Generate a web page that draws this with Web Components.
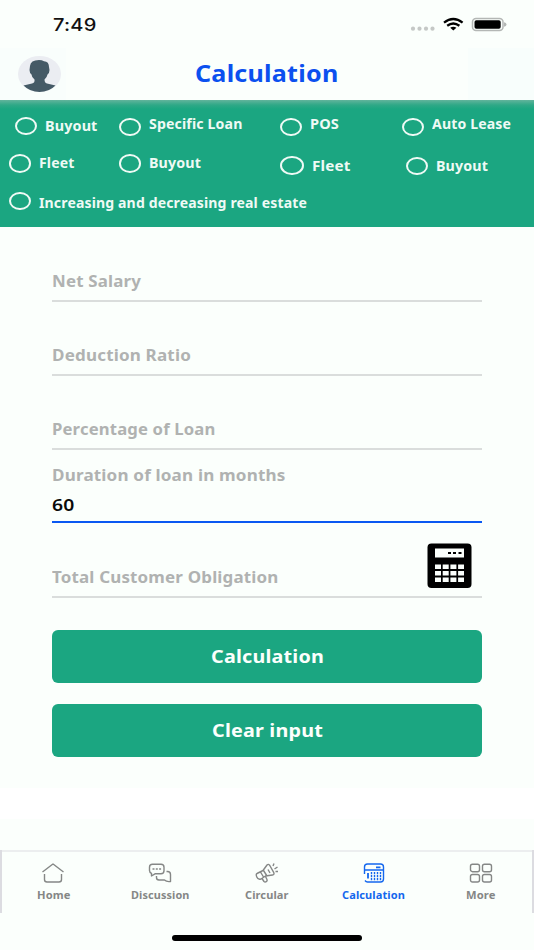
<!DOCTYPE html>
<html lang="en">
<head>
  <meta charset="utf-8">
  <title>Calculation</title>
  <style>
    body {
      margin: 0;
      background: #fbfffc;
      font-family: "Noto Sans", "Open Sans", sans-serif;
    }
  </style>
</head>
<body>
  <loan-app></loan-app>

  <template id="appTemplate">
    <style>
      :host {
        display: flex;
        flex-direction: column;
        width: 534px;
        height: 950px;
        overflow: hidden;
        background: #fbfffc;
      }
      .options {
        display: grid;
        grid-template-columns: 109.5px 161px 122px 1fr;
        grid-template-rows: 38px 38px 32px;
        box-sizing: border-box;
        height: 127px;
        padding: 15.5px 0 0 9px;
        background: linear-gradient(#62b49c 0, #2fa887 5px, #1ba681 9px);
      }
      .wide { grid-column: 1 / 5; }
      form {
        display: flex;
        flex-direction: column;
        box-sizing: border-box;
        height: 561px;
        margin: 0;
        padding: 0 52px;
      }
      .actions {
        display: flex;
        flex-direction: column;
        gap: 21px;
        padding-top: 31.5px;
      }
      .band { height: 31px; background: #fff; }
      nav {
        display: grid;
        grid-template-columns: repeat(5, 1fr);
        height: 63px;
        margin-top: 31px;
        box-shadow: inset 2px 0 #dcdce1, inset -2px 0 #dcdce1, inset 0 2px #eceeef;
      }
      .home-bar {
        width: 190px;
        height: 6px;
        margin: 22px auto 0;
        border-radius: 3px;
        background: #000;
      }
    </style>
    <status-bar></status-bar>
    <page-header>Calculation</page-header>
    <div class="options">
      <radio-option w="52.5" style="margin: 1px 0 0 6px">Buyout</radio-option>
      <radio-option w="93.5" style="margin-top: 2px; --shift: -5px">Specific Loan</radio-option>
      <radio-option w="29" style="margin-top: 2px; --shift: -5px">POS</radio-option>
      <radio-option w="79" style="margin-top: 2px; --shift: -5px">Auto Lease</radio-option>
      <radio-option w="35.5" style="margin-top: 0.5px">Fleet</radio-option>
      <radio-option w="52" style="margin-top: 0.5px">Buyout</radio-option>
      <radio-option w="38.5" style="margin-top: 2px; --ring-w: 24px; --ring-h: 19.5px; --size: 14.5px">Fleet</radio-option>
      <radio-option w="52" style="margin: 3px 0 0 4px">Buyout</radio-option>
      <radio-option class="wide" w="268" style="--shift: 5px">Increasing and decreasing real estate</radio-option>
    </div>
    <form>
      <form-field label="Net Salary" w="89" style="height: 75px"></form-field>
      <form-field label="Deduction Ratio" w="139" style="height: 74px"></form-field>
      <form-field label="Percentage of Loan" w="163.5" style="height: 74px"></form-field>
      <form-field label="Duration of loan in months" w="233.5" value="60" style="height: 73px"></form-field>
      <form-field label="Total Customer Obligation" w="226.5" style="height: 75px">
        <svg width="45" height="45" viewBox="0 0 45 45">
          <rect x="0.5" y="0.5" width="44" height="44.500" rx="4"/>
          <path fill="#fbfffc" d="M8 5.500h29v9H8z"/>
          <path d="M21 9h3v2h-3zM26 9h3v2h-3zM31.500 9h3v2h-3z"/>
          <path stroke="#fbfffc" stroke-width="4.500" stroke-dasharray="6 1.700" d="M8 23.800h29M8 30.300h29M8 36.800h29"/>
        </svg>
      </form-field>
      <div class="actions">
        <action-button w="113">Calculation</action-button>
        <action-button w="111">Clear input</action-button>
      </div>
    </form>
    <div class="band"></div>
    <nav>
      <tab-item label="Home" w="33.5">
        <svg width="24" height="22" viewBox="0 0 24 22">
          <path d="M1.500 10 11.600 2.200Q12 2 12.400 2.200L22.500 10M3.500 12v5.500Q3.500 20 6 20h12q2.500 0 2.500-2.500V12"/>
        </svg>
      </tab-item>
      <tab-item label="Discussion" w="58.5">
        <svg width="24" height="22" viewBox="0 0 24 22">
          <path d="M4.500 2.200H13q3 0 3 3v3.600q0 3-3 3H7L3.500 14v-2.700Q1.500 10.500 1.500 8.500V5.200q0-3 3-3zM8.500 14v1.500q0 2.500 2.500 2.500h5.500q2 2 6 1.500v-7q0-3-3-3H18.500"/>
          <path stroke-dasharray="2 1.300" d="M4.500 7h9"/>
        </svg>
      </tab-item>
      <tab-item label="Circular" w="43.5">
        <svg width="24" height="22" viewBox="0 0 24 22">
          <path d="M2 11.500 8 8.500l4-5.500q1.500-1.500 2.800.5l4 7.200q.8 2-1.300 2.300l-7 1-4.500 3Q3 18 1.800 15T2 11.500zM5.500 10l3 5M8.500 8.500l3.500 5.500M7 16.500l2 3q1 1 2.300.2t.7-2.200L10.500 14.500M13 7.500l2 3.500"/>
          <path d="M18 4 19 1.500M19.500 7l3-2M20.500 9.500H23"/>
        </svg>
      </tab-item>
      <tab-item label="Calculation" w="63" active>
        <svg width="24" height="22" viewBox="0 0 24 22">
          <path d="M2.500 12V5q0-3 3-3h13q3 0 3 3v12q0 3-3 3h-13Q4 20 3 18.500M2.500 8h19"/>
          <path stroke-width="1.800" d="M14 5.300h4.500M6 11v5.500"/>
          <path stroke-dasharray="2.200 .8" d="M9.500 10v8.500M12.500 10v8.500M15.500 10v8.500M18.500 10v8.500"/>
        </svg>
      </tab-item>
      <tab-item label="More" w="29.5">
        <svg width="24" height="22" viewBox="0 0 24 22">
          <rect x="1.500" y="2.200" width="9" height="7.500" rx="2"/>
          <rect x="13.500" y="2.200" width="9" height="7.500" rx="2"/>
          <rect x="1.500" y="12.500" width="9" height="7.500" rx="2"/>
          <rect x="13.500" y="12.500" width="9" height="7.500" rx="2"/>
        </svg>
      </tab-item>
    </nav>
    <div class="home-bar"></div>
  </template>

  <template id="statusTemplate">
    <style>
      :host {
        display: flex;
        justify-content: space-between;
        box-sizing: border-box;
        height: 48px;
        padding: 15px 27px 0 53px;
      }
      fit-text {
        font: 500 17px/20px Inter, sans-serif;
        color: #111;
      }
      svg { display: block; }
    </style>
    <fit-text w="43.500">7:49</fit-text>
    <svg width="97" height="18" viewBox="0 0 97 18">
      <g fill="#c5c8c6">
        <circle cx="3" cy="13.700" r="2.100"/><circle cx="9.500" cy="13.700" r="2.100"/>
        <circle cx="16" cy="13.700" r="2.100"/><circle cx="22.500" cy="13.700" r="2.100"/>
      </g>
      <g fill="none" stroke="#000" stroke-width="2.300">
        <path d="M34 7.600Q43.300.5 52.600 7.600M37.200 10.700Q43.300 6.200 49.400 10.700"/>
      </g>
      <path d="M40.200 12.800Q43.300 10.600 46.400 12.800L43.300 15.500z"/>
      <rect x="62.500" y="3.600" width="30.500" height="11.800" rx="3.500" fill="none" stroke="#b4b7b5" stroke-width="1.500"/>
      <rect x="64.500" y="5.300" width="26.200" height="8.500" rx="1.800"/>
      <path fill="#b4b7b5" d="M94 7.200q2.500.6 2.500 2.200T94 11.700z"/>
    </svg>
  </template>

  <template id="headerTemplate">
    <style>
      :host {
        display: grid;
        grid-template-columns: 66px 1fr 66px;
        height: 52px;
      }
      .avatar { background: #f9fefc; padding: 8px 0 0 18px; }
      .corner { background: #f8fefc; }
      fit-text {
        margin: 11px auto 0;
        font-size: 22.5px;
        line-height: 30px;
        font-weight: 700;
        color: #0b50ef;
      }
      svg { display: block; }
    </style>
    <div class="avatar">
      <svg width="44" height="36" viewBox="0 0 44 36">
        <ellipse cx="21.500" cy="18" rx="21.500" ry="18" fill="#ebedf2"/>
        <path fill="#455a66" d="M12 10Q12.500 4 21 4q3 0 5 1.200Q31 5.500 31 11l.5 3q0 3-2 4.500-.5 3-3 5 0 3.500 2.500 4l8.500 2Q31 36 21.500 36T5.500 29.500l8.500-2q3-.6 2.500-4-2.700-2-3-5-2-1.500-2-4.500z"/>
      </svg>
    </div>
    <fit-text w="143.500"></fit-text>
    <div class="corner"></div>
  </template>

  <script>
    function stamp(el, id) {
      const root = el.attachShadow({ mode: 'open' });
      root.appendChild(document.getElementById(id).content.cloneNode(true));
      return root;
    }

    // one line of text, stretched sideways so that it fills the given width
    class FitText extends HTMLElement {
      connectedCallback() {
        if (this.shadowRoot) return;
        const root = this.attachShadow({ mode: 'open' });
        root.innerHTML = `
          <style>
            :host { display: block; flex: none; white-space: nowrap; }
            span { display: inline-block; transform-origin: 0 50%; letter-spacing: 0.01em; }
          </style>
          <span></span>`;
        const span = root.querySelector('span');
        const width = parseFloat(this.getAttribute('w'));
        span.textContent = this.getAttribute('text') || this.textContent.trim();
        const natural = span.getBoundingClientRect().width;
        span.style.transform = `scaleX(${width / natural})`;
        this.style.width = width + 'px';
      }
    }

    class StatusBar extends HTMLElement {
      connectedCallback() {
        stamp(this, 'statusTemplate');
      }
    }

    class PageHeader extends HTMLElement {
      connectedCallback() {
        const root = this.attachShadow({ mode: 'open' });
        const content = document.getElementById('headerTemplate').content.cloneNode(true);
        content.querySelector('fit-text').setAttribute('text', this.textContent.trim());
        root.appendChild(content);
      }
    }

    class RadioOption extends HTMLElement {
      connectedCallback() {
        this.attachShadow({ mode: 'open' }).innerHTML = `
          <style>
            :host { display: flex; align-items: flex-start; gap: 8px; color: #effaf5; }
            .ring {
              flex: none;
              box-sizing: border-box;
              width: var(--ring-w, 22px);
              height: var(--ring-h, 18.5px);
              border: 2px solid #effaf5;
              border-radius: 50%;
            }
            fit-text {
              margin-top: calc(var(--shift, 0px) / 2);
              font-size: var(--size, 13.5px);
              font-weight: 700;
              line-height: 18px;
            }
          </style>
          <div class="ring"></div>
          <fit-text w="${this.getAttribute('w')}" text="${this.textContent.trim()}"></fit-text>`;
      }
    }

    class FormField extends HTMLElement {
      connectedCallback() {
        const value = this.getAttribute('value');
        this.attachShadow({ mode: 'open' }).innerHTML = `
          <style>
            :host {
              display: flex;
              flex: none;
              justify-content: space-between;
              align-items: flex-end;
              box-sizing: border-box;
              border-bottom: 2px solid ${value ? '#0a58f2' : '#dadddc'};
              padding-bottom: ${value ? 5 : 8.5}px;
            }
            fit-text { font-size: 16px; font-weight: 700; line-height: 22px; color: #b0b2b1; }
            .value { margin-top: 8px; font-weight: 600; color: #0a0a0a; }
            ::slotted(svg) { display: block; margin-right: 10px; }
          </style>
          <div>
            <fit-text w="${this.getAttribute('w')}" text="${this.getAttribute('label')}"></fit-text>
            ${value ? `<fit-text class="value" w="22.500" text="${value}"></fit-text>` : ''}
          </div>
          <slot></slot>`;
      }
    }

    class ActionButton extends HTMLElement {
      connectedCallback() {
        this.attachShadow({ mode: 'open' }).innerHTML = `
          <style>
            :host {
              display: flex;
              justify-content: center;
              align-items: center;
              height: 53px;
              border-radius: 6px;
              background: #1ba681;
              color: #fbfffc;
              font-size: 18.5px;
              line-height: 24px;
              font-weight: 700;
            }
          </style>
          <fit-text w="${this.getAttribute('w')}" text="${this.textContent.trim()}"></fit-text>`;
      }
    }

    class TabItem extends HTMLElement {
      connectedCallback() {
        const active = this.hasAttribute('active');
        this.attachShadow({ mode: 'open' }).innerHTML = `
          <style>
            :host {
              display: flex;
              flex-direction: column;
              align-items: center;
              gap: 4px;
              padding-top: 12px;
              color: ${active ? '#1467ee' : '#858786'};
            }
            ::slotted(svg) {
              display: block;
              fill: none;
              stroke: currentColor;
              stroke-width: 1.4px;
              stroke-linejoin: round;
            }
            fit-text { font-size: 10.5px; line-height: 14px; font-weight: 700; }
          </style>
          <slot></slot>
          <fit-text w="${this.getAttribute('w')}" text="${this.getAttribute('label')}"></fit-text>`;
      }
    }

    class LoanApp extends HTMLElement {
      connectedCallback() {
        stamp(this, 'appTemplate');
      }
    }

    customElements.define('fit-text', FitText);
    customElements.define('status-bar', StatusBar);
    customElements.define('page-header', PageHeader);
    customElements.define('radio-option', RadioOption);
    customElements.define('form-field', FormField);
    customElements.define('action-button', ActionButton);
    customElements.define('tab-item', TabItem);
    customElements.define('loan-app', LoanApp);
  </script>
</body>
</html>
